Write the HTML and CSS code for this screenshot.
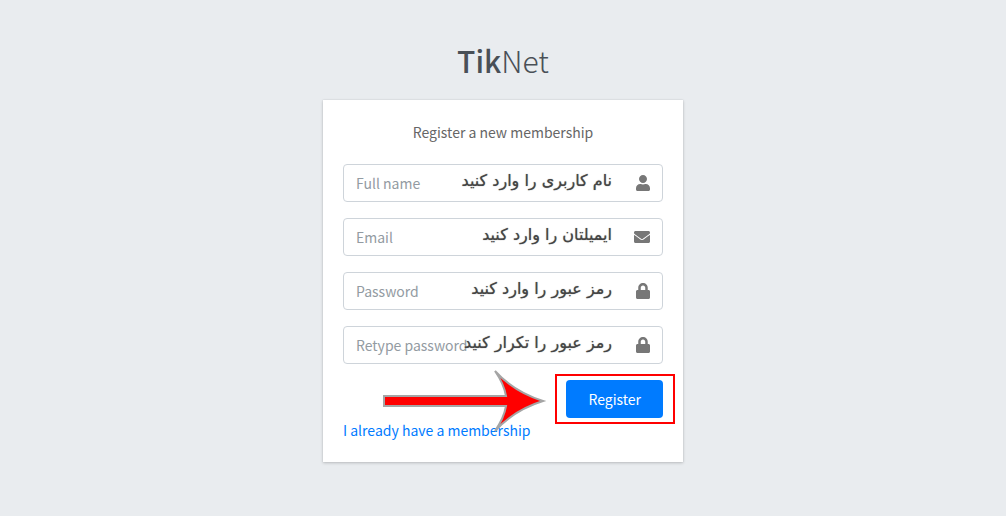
FILE: index.html
```html
<!DOCTYPE html>
<html lang="en">
<head>
    <meta charset="UTF-8">
    <meta name="viewport" content="width=device-width, initial-scale=1.0">
    <title>TikNet | Register</title>
    <link rel="stylesheet" href="styles.css">
</head>
<body>
    <main class="register-box">
        <h1 class="register-logo"><b>Tik</b>Net</h1>

        <div class="card">
            <p class="box-msg">Register a new membership</p>

            <form action="#" method="post">
                <div class="input-group">
                    <input type="text" id="name" placeholder="Full name">
                    <svg class="icon" viewBox="0 0 448 512"><path d="M224 256c70.700 0 128-57.300 128-128S294.700 0 224 0 96 57.300 96 128s57.300 128 128 128zm89.600 32h-16.700c-22.200 10.200-46.900 16-72.900 16s-50.600-5.800-72.900-16h-16.700C60.200 288 0 348.200 0 422.400V464c0 26.500 21.500 48 48 48h352c26.500 0 48-21.500 48-48v-41.600c0-74.200-60.200-134.400-134.400-134.400z"/></svg>
                    <label class="note" for="name" lang="fa">نام کاربری را وارد کنید</label>
                </div>

                <div class="input-group">
                    <input type="email" id="email" placeholder="Email">
                    <svg class="icon" viewBox="0 0 512 512"><path d="M502.300 190.800c3.900-3.100 9.700-.2 9.700 4.700V400c0 26.500-21.500 48-48 48H48c-26.500 0-48-21.500-48-48V195.600c0-5 5.700-7.800 9.700-4.700 22.400 17.400 52.100 39.500 154.100 113.600 21.100 15.400 56.700 47.800 92.200 47.600 35.700.3 72-32.800 92.300-47.600 102-74.100 131.600-96.300 154-113.700zM256 320c23.200.4 56.600-29.200 73.400-41.400 132.700-96.300 142.800-104.700 173.400-128.700 5.800-4.500 9.200-11.500 9.200-18.900v-19c0-26.500-21.500-48-48-48H48c-26.500 0-48 21.500-48 48v19c0 7.400 3.400 14.300 9.200 18.900 30.600 23.900 40.700 32.400 173.400 128.700 16.800 12.200 50.200 41.800 73.400 41.400z"/></svg>
                    <label class="note" for="email" lang="fa">ایمیلتان را وارد کنید</label>
                </div>

                <div class="input-group">
                    <input type="password" id="password" placeholder="Password">
                    <svg class="icon" viewBox="0 0 448 512"><path d="M400 224h-24v-72C376 68.200 307.800 0 224 0S72 68.200 72 152v72H48c-26.500 0-48 21.500-48 48v192c0 26.500 21.500 48 48 48h352c26.500 0 48-21.500 48-48V272c0-26.500-21.500-48-48-48zm-104 0H152v-72c0-39.700 32.300-72 72-72s72 32.300 72 72v72z"/></svg>
                    <label class="note" for="password" lang="fa">رمز عبور را وارد کنید</label>
                </div>

                <div class="input-group">
                    <input type="password" id="retype" placeholder="Retype password">
                    <svg class="icon" viewBox="0 0 448 512"><path d="M400 224h-24v-72C376 68.200 307.800 0 224 0S72 68.200 72 152v72H48c-26.500 0-48 21.500-48 48v192c0 26.500 21.500 48 48 48h352c26.500 0 48-21.500 48-48V272c0-26.500-21.500-48-48-48zm-104 0H152v-72c0-39.700 32.300-72 72-72s72 32.300 72 72v72z"/></svg>
                    <label class="note" for="retype" lang="fa">رمز عبور را تکرار کنید</label>
                </div>

                <div class="submit-row">
                    <!-- arrow and red frame point at the button -->
                    <svg class="arrow" viewBox="0 0 164 66"><path d="M1 28H123Q121 16 112 3Q131 24 160 33Q131 42 112 63Q121 50 123 38H1Z"/></svg>
                    <div class="marked">
                        <button type="submit">Register</button>
                    </div>
                </div>
            </form>

            <a class="login-link" href="#">I already have a membership</a>
        </div>
    </main>
</body>
</html>
```
FILE: styles.css
```css
* {
    box-sizing: border-box;
}

body {
    margin: 0;
    min-height: 100vh;
    display: flex;
    flex-direction: column;
    align-items: center;
    justify-content: center;
    background-color: #e9ecef;
    color: #212529;
    font-family: "Noto Sans CJK JP", "Noto Sans", sans-serif;
    font-size: 14px;
    line-height: 24px;
}

.register-box {
    width: 360px;
    max-width: 100%;
    padding-bottom: 16px;
}

.register-logo {
    margin: 0 0 18px;
    text-align: center;
    color: #495057;
    font-size: 30px;
    font-weight: 300;
    line-height: 44px;
}

.register-logo b {
    font-weight: 500;
}

.card {
    padding: 20px;
    background-color: #fff;
    box-shadow: 0 0 1px rgba(0, 0, 0, 0.125), 0 1px 3px rgba(0, 0, 0, 0.2);
}

.box-msg {
    margin: 0 0 20px;
    text-align: center;
    color: #666;
}

/* fields */
.input-group {
    position: relative;
    display: flex;
    align-items: center;
    height: 38px;
    margin-bottom: 16px;
    padding-right: 12px;
    border: 1px solid #ced4da;
    border-radius: 4px;
}

.input-group input {
    flex: 1;
    min-width: 0;
    height: 36px;
    padding: 0 12px;
    border: 0;
    outline: 0;
    background: transparent;
    color: #495057;
    font: inherit;
}

.input-group input::placeholder {
    color: #939ba2;
    opacity: 1;
}

.icon {
    height: 16px;
    fill: #777;
}

/* persian hint lying over the field */
.note {
    position: absolute;
    top: 4px;
    right: 50px;
    direction: rtl;
    white-space: nowrap;
    color: #444;
    font-family: "DejaVu Sans", sans-serif;
    font-size: 16px;
    text-shadow: 0 0 1px #777;
}

/* button */
.submit-row {
    position: relative;
    display: flex;
    justify-content: flex-end;
}

.marked {
    position: relative;
}

.marked::after {
    content: "";
    position: absolute;
    inset: -6px -12px -6px -11px;
    border: 2px solid #f00;
    pointer-events: none;
}

button {
    display: block;
    height: 38px;
    padding: 0 22px;
    border: 0;
    border-radius: 4px;
    background-color: #007bff;
    color: #fff;
    font: inherit;
    cursor: pointer;
}

.arrow {
    position: absolute;
    top: -12px;
    left: 40px;
    width: 164px;
    height: 66px;
    fill: #f00;
    stroke: #a5a5a5;
    stroke-width: 2;
    pointer-events: none;
}

.login-link {
    display: block;
    color: #007bff;
    text-decoration: none;
}
```
